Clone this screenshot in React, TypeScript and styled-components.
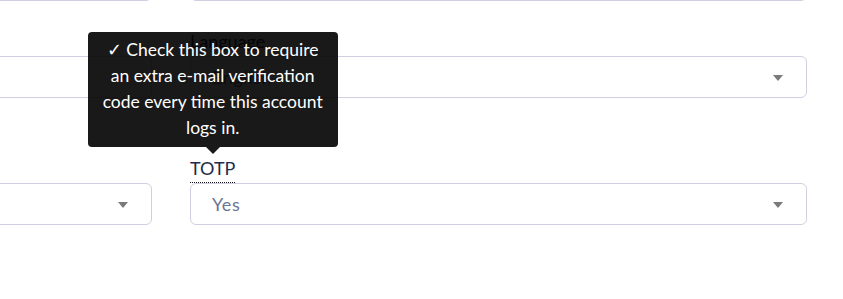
import React from 'react';
import styled, { createGlobalStyle } from 'styled-components';

const GlobalStyle = createGlobalStyle`
  html, body {
    margin: 0;
    padding: 0;
    background: #ffffff;
    overflow: hidden;
  }
  body {
    font-family: Lato, 'Open Sans', sans-serif;
  }
`;

const S = {
  Page: styled.div`
    width: 843px;
    height: 299px;
    overflow: hidden;
  `,
  Form: styled.form`
    display: grid;
    grid-template-columns: 617px 617px;
    column-gap: 38px;
    margin-left: -465px;
    margin-top: -41px;
  `,
  Field: styled.div<{ $space: number }>`
    display: flex;
    flex-direction: column;
    align-items: flex-start;
    margin-bottom: ${({ $space }) => $space}px;
  `,
  LabelWrap: styled.div`
    position: relative;
    display: inline-block;
  `,
  Label: styled.label<{ $hint?: boolean }>`
    display: inline-block;
    font-family: Lato, sans-serif;
    font-size: 18px;
    line-height: 28px;
    color: #1e2b4b;
    border-bottom: 1px ${({ $hint }) => ($hint ? 'dotted #111' : 'solid transparent')};
    cursor: ${({ $hint }) => ($hint ? 'help' : 'default')};
  `,
  Tooltip: styled.div`
    position: absolute;
    bottom: calc(100% + 7px);
    left: 50%;
    transform: translateX(-50%);
    width: 250px;
    box-sizing: border-box;
    padding: 5px 11px 6px;
    background: rgba(0, 0, 0, 0.9);
    color: #ffffff;
    border-radius: 4px;
    font-family: Lato, sans-serif;
    font-size: 17.5px;
    line-height: 26px;
    text-align: center;
    z-index: 10;

    &:after {
      content: '';
      position: absolute;
      top: 100%;
      left: 50%;
      margin-left: -7px;
      border-width: 7px 7px 0;
      border-style: solid;
      border-color: rgba(0, 0, 0, 0.9) transparent transparent;
    }
  `,
  Input: styled.input`
    width: 100%;
    height: 42px;
    box-sizing: border-box;
    border: 1px solid #cfcfe1;
    border-radius: 6px;
    padding: 0 22px;
    font-family: Lato, sans-serif;
    font-size: 18px;
    color: #6a7596;
    outline: none;
  `,
  SelectWrap: styled.div`
    position: relative;
    width: 100%;
  `,
  Select: styled.select`
    width: 100%;
    height: 42px;
    box-sizing: border-box;
    appearance: none;
    -webkit-appearance: none;
    background: #ffffff;
    border: 1px solid #cfcfe1;
    border-radius: 6px;
    padding: 0 40px 0 21px;
    font-family: Lato, sans-serif;
    font-size: 18px;
    letter-spacing: 0.6px;
    color: #6a7596;
    outline: none;
  `,
  Caret: styled.span`
    position: absolute;
    right: 24px;
    top: 50%;
    margin-top: -2px;
    width: 0;
    height: 0;
    border-left: 5px solid transparent;
    border-right: 5px solid transparent;
    border-top: 6px solid #7a7a7a;
    pointer-events: none;
  `,
};

type SelectProps = { value: string; options: string[] };

function SelectBox({ value, options }: SelectProps) {
  return (
    <S.SelectWrap>
      <S.Select defaultValue={value}>
        {options.map((o) => (
          <option key={o} value={o}>
            {o}
          </option>
        ))}
      </S.Select>
      <S.Caret />
    </S.SelectWrap>
  );
}

export default function App() {
  return (
    <S.Page>
      <GlobalStyle />
      <S.Form onSubmit={(e) => e.preventDefault()}>
        <S.Field $space={26}>
          <S.Input defaultValue="" />
        </S.Field>
        <S.Field $space={26}>
          <S.Input defaultValue="" />
        </S.Field>

        <S.Field $space={56}>
          <S.LabelWrap>
            <S.Label>{'\u00a0'}</S.Label>
          </S.LabelWrap>
          <SelectBox value="" options={['']} />
        </S.Field>
        <S.Field $space={56}>
          <S.LabelWrap>
            <S.Label>Language</S.Label>
          </S.LabelWrap>
          <SelectBox value="English" options={['English', 'Deutsch', 'Français']} />
        </S.Field>

        <S.Field $space={56}>
          <S.LabelWrap>
            <S.Label>{'\u00a0'}</S.Label>
          </S.LabelWrap>
          <SelectBox value="" options={['']} />
        </S.Field>
        <S.Field $space={56}>
          <S.LabelWrap>
            <S.Tooltip>
              ✓ Check this box to require an extra e-mail verification code every time this
              account logs in.
            </S.Tooltip>
            <S.Label $hint>TOTP</S.Label>
          </S.LabelWrap>
          <SelectBox value="Yes" options={['Yes', 'No']} />
        </S.Field>
      </S.Form>
    </S.Page>
  );
}
